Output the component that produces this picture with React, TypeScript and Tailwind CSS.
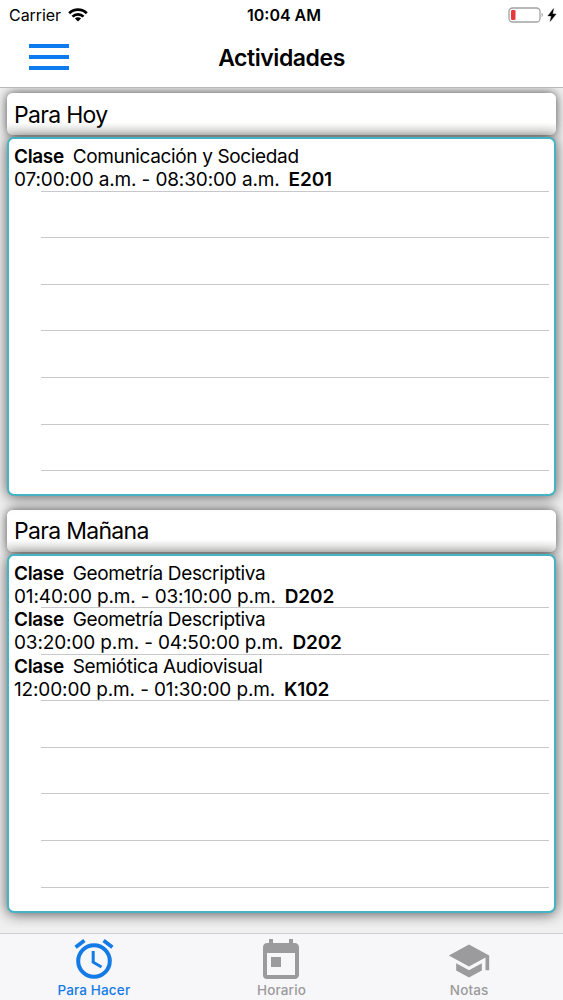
import { MdSchool, MdToday } from "react-icons/md";

type Activity = {
  name: string;
  time: string;
  room: string;
};

const today: Activity[] = [
  {
    name: "Comunicación y Sociedad",
    time: "07:00:00 a.m. - 08:30:00 a.m.",
    room: "E201",
  },
];

const tomorrow: Activity[] = [
  {
    name: "Geometría Descriptiva",
    time: "01:40:00 p.m. - 03:10:00 p.m.",
    room: "D202",
  },
  {
    name: "Geometría Descriptiva",
    time: "03:20:00 p.m. - 04:50:00 p.m.",
    room: "D202",
  },
  {
    name: "Semiótica Audiovisual",
    time: "12:00:00 p.m. - 01:30:00 p.m.",
    room: "K102",
  },
];

// the table always draws this many rows, empty ones included
const ROWS = 7;

function AlarmIcon({ className }: { className?: string }) {
  return (
    <svg
      viewBox="0 0 48 48"
      className={className}
      fill="none"
      stroke="currentColor"
    >
      <circle cx="24" cy="24" r="15.8" strokeWidth="4" />
      <path d="M5.6 10.2 14.4 3.4M42.4 10.2 33.6 3.4" strokeWidth="3.8" />
      <path d="M23.2 14v11.2l8.3 4.8" strokeWidth="3" />
    </svg>
  );
}

const tabs = [
  { label: "Para Hacer", Icon: AlarmIcon, size: "size-[48px]", active: true },
  { label: "Horario", Icon: MdToday, size: "size-[48px]", active: false },
  { label: "Notas", Icon: MdSchool, size: "size-[44px]", active: false },
];

function StatusBar() {
  return (
    <div className="grid h-[29px] grid-cols-3 items-center pl-[9px] pr-[6px] text-[16px]">
      <div className="flex items-center gap-[7px]">
        <span className="tracking-[-0.05px]">Carrier</span>
        <svg viewBox="0 0 20 14" className="h-[14px] w-[20px]">
          <g fill="none" stroke="#000" strokeWidth="2.7">
            <path d="M1.2 5.2a12.5 12.5 0 0 1 17.6 0" />
            <path d="M4.5 8.6a7.8 7.8 0 0 1 11 0" />
          </g>
          <path d="M10 13.6 6.9 10.5a4.4 4.4 0 0 1 6.2 0z" />
        </svg>
      </div>
      <span className="pl-[2px] text-center font-semibold">10:04 AM</span>
      <div className="flex items-center justify-end gap-[3px]">
        <svg viewBox="0 0 36 16" className="h-[16px] w-[36px]">
          <rect
            x="1"
            y="1"
            width="31"
            height="14"
            rx="3.5"
            fill="none"
            stroke="#a3a3a3"
            strokeWidth="1.3"
          />
          <rect x="3" y="3" width="4.5" height="10" rx="1.3" fill="#e5393b" />
          <path d="M33.6 5.8c1.5.6 1.5 3.8 0 4.4z" fill="#999" />
        </svg>
        <svg viewBox="0 0 9 14" className="h-[14px] w-[10px]">
          <path
            d="M6.1.6.4 7.9h3.4L2.7 13.4 8.6 6H5.1z"
            stroke="#000"
            strokeWidth="0.4"
          />
        </svg>
      </div>
    </div>
  );
}

function Header() {
  return (
    <header className="h-[88px] shrink-0 border-b border-[#b9b9b9] bg-white">
      <StatusBar />
      <div className="grid h-[57px] grid-cols-[1fr_auto_1fr] items-center">
        <button
          type="button"
          aria-label="Menú"
          className="-mt-[2px] ml-[29px] flex w-10 flex-col gap-[7px]"
        >
          <span className="h-1 bg-[#0e7af0]" />
          <span className="h-1 bg-[#0e7af0]" />
          <span className="h-1 bg-[#0e7af0]" />
        </button>
        <h1 className="pt-px text-[23px] font-semibold tracking-[-0.45px]">
          Actividades
        </h1>
      </div>
    </header>
  );
}

function Row({ activity }: { activity?: Activity }) {
  return (
    <li className="flex h-[46.6px] flex-col">
      <div className="h-[45.6px] whitespace-pre text-[19px] leading-[23px]">
        {activity && (
          <>
            <p className="tracking-[-0.36px]">
              <b className="mr-[9px] font-semibold">Clase</b>
              {activity.name}
            </p>
            <p className="tracking-[-0.14px]">
              {activity.time}
              <b className="ml-[9px] font-semibold">{activity.room}</b>
            </p>
          </>
        )}
      </div>
      <div className="ml-[27px] h-px shrink-0 bg-[#c8c7cc]" />
    </li>
  );
}

function Section({ title, items }: { title: string; items: Activity[] }) {
  return (
    <section>
      <h2 className="flex h-[42px] items-center rounded-[6px] bg-linear-to-b from-white from-70% to-[#e2e2e0] pl-[7px] pt-[2px] text-[23px] tracking-[-0.7px] shadow-[0_0_11px_rgba(0,0,0,0.7)]">
        {title}
      </h2>
      <ul className="relative mt-[2px] h-[359px] rounded-[7px] border-2 border-[#45b3c4] bg-white px-[5px] pt-[6px] shadow-[0_1px_14px_rgba(0,0,0,0.65)]">
        {Array.from({ length: ROWS }, (_, i) => (
          <Row key={i} activity={items[i]} />
        ))}
      </ul>
    </section>
  );
}

function TabBar() {
  return (
    <nav className="grid h-[67px] shrink-0 grid-cols-3 border-t border-[#cfcdcf] bg-[#f7f6f8]">
      {tabs.map(({ label, Icon, size, active }) => (
        <div
          key={label}
          className={`flex flex-col items-center pt-[3px] ${
            active ? "text-[#147be6]" : "text-[#9b9a9c]"
          }`}
        >
          <div className="flex h-[48px] items-center">
            <Icon className={size} />
          </div>
          <span className="-mt-[3px] text-[13.5px] font-medium leading-[16px] tracking-[0.15px]">
            {label}
          </span>
        </div>
      ))}
    </nav>
  );
}

export default function App() {
  return (
    <div className="flex h-[1000px] w-[563px] flex-col overflow-hidden bg-white font-['Inter','Liberation_Sans',sans-serif] text-black">
      <Header />
      <main className="flex flex-1 flex-col gap-[13.5px] overflow-hidden bg-[#f1f0f1] px-[7px] pt-[5px]">
        <Section title="Para Hoy" items={today} />
        <Section title="Para Mañana" items={tomorrow} />
      </main>
      <TabBar />
    </div>
  );
}
